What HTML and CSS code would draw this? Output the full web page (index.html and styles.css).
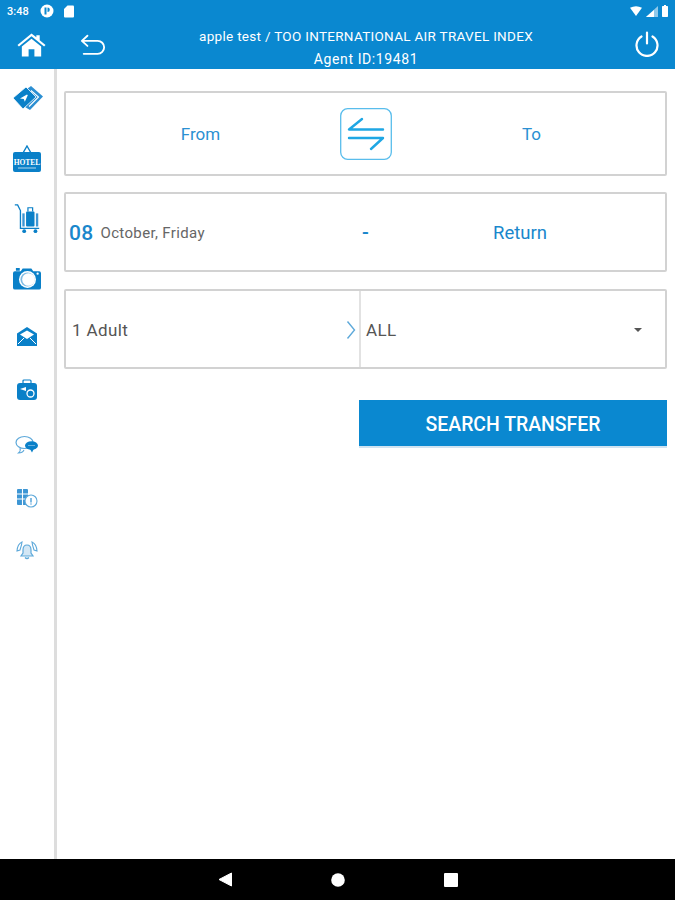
FILE: index.html
```html
<!DOCTYPE html>
<html lang="en">
<head>
<meta charset="utf-8">
<title>Search Transfer</title>
<link rel="stylesheet" href="styles.css">
</head>
<body>
<div class="app">
  <header class="topbar">
    <div class="status">
      <div class="status-left">
        <span class="clock">3:48</span>
        <svg class="st-icon" width="14" height="14" viewBox="0 0 14 14"><circle cx="7" cy="7" r="6.500" fill="#fff"/><path d="M4.500 3.500h2v7h-2zM7.500 3.500a2.300 2.300 0 0 1 0 4.600z" fill="#0a88d0"/></svg>
        <svg class="st-icon" width="10" height="13" viewBox="0 0 10 13"><path d="M3.500 .5H9a1 1 0 0 1 1 1v10a1 1 0 0 1-1 1H1a1 1 0 0 1-1-1V4z" fill="#fff"/></svg>
      </div>
      <div class="status-right">
        <svg width="12" height="10" viewBox="0 0 12 10"><path d="M0 1.800Q6-1.500 12 1.800L6 10z" fill="#fff"/></svg>
        <svg width="12" height="11" viewBox="0 0 12 11"><path d="M12 0v11H0z" fill="#fff" opacity=".55"/><path d="M8 4v7H0z" fill="#fff"/></svg>
        <svg width="6" height="12" viewBox="0 0 6 12"><path d="M2 0h2v1h1.300q.7 0 .7.8v9.400q0 .8-.7.8H.7q-.7 0-.7-.8V1.800q0-.8.7-.8H2z" fill="#fff"/></svg>
      </div>
    </div>
    <div class="toolbar">
      <svg class="home" width="29" height="24" viewBox="0 0 30 24"><path d="M15 0 20 4V1.800h3.500V7L29.500 12 28 13.500 15 3 2 13.500 .5 12z" fill="#fff"/><path d="M15 5.500 25 13.500V24H18V16.500H12V24H5V13.500z" fill="#fff"/></svg>
      <svg class="back" width="26" height="22" viewBox="0 0 28 23"><path d="M8 1.500 2 7l6 5.500M2.500 7H19a6.800 6.800 0 0 1 0 14H4" fill="none" stroke="#fff" stroke-width="2" stroke-linecap="round" stroke-linejoin="round"/></svg>
      <div class="agent">
        <div>apple test / TOO INTERNATIONAL AIR TRAVEL INDEX</div>
        <div class="agent-id">Agent ID:19481</div>
      </div>
      <svg class="power" width="26" height="26" viewBox="0 0 26 26"><path d="M7.500 5.500a10.500 10.500 0 1 0 11 0M13 1.500v11" fill="none" stroke="#fff" stroke-width="2.200" stroke-linecap="round"/></svg>
    </div>
  </header>

  <div class="body">
    <nav class="side">
      <svg width="30" height="24" viewBox="0 0 30 24"><path d="M14 3 18 0l12 10.500L17 24l-5-3z" fill="#2c8fd2"/><path d="M18 4.500 25.500 11 16 20.500" fill="none" stroke="#fff" stroke-width="1.100"/><path d="M0 12 13 1l10 10L10 23z" fill="#0a80c8" stroke="#fff" stroke-width=".8"/><path d="M7 12.500l7-4 .8.8-3 6.500-1-2.800z" fill="#fff"/></svg>
      <svg width="28" height="28" viewBox="0 0 28 28"><path d="M14 1l4 7h-8z" fill="none" stroke="#0a80c8" stroke-width="1.400"/><rect x="0" y="7" width="28" height="20" rx="2" fill="#0a80c8"/><text x="14" y="19.500" class="hotel">HOTEL</text><path d="M5 23h18" stroke="#fff" stroke-width="1" opacity=".7"/></svg>
      <svg width="28" height="30" viewBox="0 0 28 32"><path d="M1 1h3l3 6v19h20" fill="none" stroke="#0a80c8" stroke-width="1.400"/><rect x="9" y="10" width="2.500" height="14" fill="#3d96d4"/><rect x="13" y="8" width="9" height="16" rx="1" fill="#0a80c8"/><path d="M15 8V4h5v4" fill="none" stroke="#0a80c8" stroke-width="1.300"/><rect x="23.500" y="10" width="2.500" height="14" fill="#3d96d4"/><circle cx="11" cy="29" r="2" fill="#0a80c8"/><circle cx="23" cy="29" r="2" fill="#0a80c8"/></svg>
      <svg width="28" height="24" viewBox="0 0 29 24"><path d="M3 .5h4v3H3zM2 4h6l2-3h9l2 3h6q2 0 2 2v15q0 2-2 2H2q-2 0-2-2V6q0-2 2-2z" fill="#0a80c8"/><circle cx="15" cy="12.500" r="8.800" fill="#fff"/><circle cx="15" cy="12.500" r="7.300" fill="#7fbbe3"/><circle cx="16" cy="12.500" r="6.500" fill="#fff"/><circle cx="25.500" cy="6.500" r="1.200" fill="#fff"/></svg>
      <svg width="22" height="19" viewBox="0 0 22 19"><path d="M11 0 21 6.500V19H1V6.500z" fill="#0a80c8"/><path d="M4 7.500 11 3.500 18 7.500 11 12z" fill="#fff"/><path d="M2 17l6-6M20 17l-6-6" stroke="#fff" stroke-width="1"/></svg>
      <svg width="22" height="22" viewBox="0 0 22 22"><path d="M7 4V2q0-1 1-1h6q1 0 1 1v2" fill="none" stroke="#0a80c8" stroke-width="1.200"/><rect x="1" y="4" width="20" height="17" rx="3" fill="#0a80c8"/><path d="M4 10l6-2v4z" fill="#fff"/><circle cx="14.500" cy="14.500" r="3.500" fill="none" stroke="#fff" stroke-width="1.300"/></svg>
      <svg width="24" height="20" viewBox="0 0 24 20"><ellipse cx="9.500" cy="7.500" rx="8.500" ry="6" fill="none" stroke="#5ea9da" stroke-width="1.200"/><path d="M5 13q1 3-1.500 5 4 0 5.500-3" fill="none" stroke="#5ea9da" stroke-width="1.100"/><ellipse cx="16.500" cy="10.500" rx="6.500" ry="4.300" fill="#0a80c8"/><path d="M15 14l2 3.500 2-4z" fill="#0a80c8"/><path d="M13 10.500h7" stroke="#7fbbe3" stroke-width=".8"/></svg>
      <svg width="22" height="20" viewBox="0 0 22 20"><rect x="1" y="1" width="11" height="16" rx="1" fill="#3d96d4"/><path d="M6.500 1v16M1 6h11M1 11h11" stroke="#fff" stroke-width="1.100"/><circle cx="15" cy="13" r="6" fill="#fff" stroke="#5ea9da" stroke-width="1.100"/><path d="M15 10v4.500" stroke="#3d96d4" stroke-width="1.300"/><circle cx="15" cy="16" r=".7" fill="#3d96d4"/></svg>
      <svg width="22" height="19" viewBox="0 0 22 19"><path d="M11 4q4 0 4 5v3l2 3H5l2-3V9q0-5 4-5z" fill="#d3e7f5" stroke="#5ea9da" stroke-width="1.200"/><path d="M9 16.500q2 2 4 0" fill="none" stroke="#5ea9da" stroke-width="1.200"/><path d="M6 1Q1.500 3 1 10l3-1 1.500-5zM16 1q4.500 2 5 9l-3-1-1.500-5z" fill="none" stroke="#5ea9da" stroke-width="1.100"/></svg>
    </nav>

    <main class="content">
      <section class="box route">
        <div class="route-cell from">From</div>
        <div class="swap">
          <svg width="52" height="52" viewBox="0 0 52 52"><rect x=".7" y=".7" width="50.600" height="50.600" rx="7" fill="#fff" stroke="#59bdec" stroke-width="1.300"/><path d="M22 11 9 21.500h34M9 30h34L31 41" fill="none" stroke="#1fa7e4" stroke-width="2.400" stroke-linecap="round" stroke-linejoin="round"/></svg>
        </div>
        <div class="route-cell to">To</div>
      </section>

      <section class="box dates">
        <div class="date"><span class="day">08</span><span class="month">October, Friday</span></div>
        <div class="dash">-</div>
        <div class="return">Return</div>
      </section>

      <section class="box options">
        <div class="pax">
          <span>1 Adult</span>
          <svg width="10" height="20" viewBox="0 0 10 20"><path d="M1.500 1.500 8.500 10l-7 8.500" fill="none" stroke="#5ea9da" stroke-width="1.400"/></svg>
        </div>
        <div class="cls">
          <span>ALL</span>
          <span class="caret"></span>
        </div>
      </section>

      <div class="actions">
        <button class="search" type="button">SEARCH TRANSFER</button>
      </div>
    </main>
  </div>

  <footer class="navbar">
    <svg width="14" height="15" viewBox="0 0 14 15"><path d="M13.500 1v13L1 7.500z" fill="#fff" stroke="#fff" stroke-linejoin="round"/></svg>
    <svg width="14" height="14" viewBox="0 0 14 14"><circle cx="7" cy="7" r="6.800" fill="#fff"/></svg>
    <svg width="14" height="14" viewBox="0 0 14 14"><rect width="14" height="14" rx="1" fill="#fff"/></svg>
  </footer>
</div>
</body>
</html>
```

FILE: styles.css
```css
* { box-sizing: border-box; }
html, body { margin: 0; padding: 0; }
body {
  width: 675px;
  height: 900px;
  overflow: hidden;
  background: #fff;
  font-family: Roboto, "Liberation Sans", sans-serif;
  color: #444;
}
.app { display: flex; flex-direction: column; height: 900px; }

.topbar { height: 69px; background: #0a88d0; color: #fff; flex: none; }
.status {
  height: 22px;
  display: flex;
  justify-content: space-between;
  align-items: center;
  padding: 0 7px;
}
.status-left { display: flex; align-items: center; gap: 10px; }
.status-left .st-icon:first-of-type { margin-left: 1px; }
.status-right { display: flex; align-items: center; gap: 4px; }
.clock { font-size: 11px; font-weight: 500; }

.toolbar { height: 47px; display: flex; align-items: center; }
.home { margin: -2px 0 0 17px; flex: none; }
.back { margin: -2px 0 0 34px; flex: none; }
.agent {
  flex: 1;
  text-align: center;
  font-size: 13.500px;
  letter-spacing: .3px;
  line-height: 23px;
  margin: 5px 0 0 22px;
  white-space: nowrap;
}
.agent-id { font-size: 14px; letter-spacing: .6px; }
.power { margin: -3px 15px 0 30px; flex: none; }

.body { flex: 1; display: flex; min-height: 0; }
.side {
  width: 57px;
  flex: none;
  border-right: 3px solid #ddd;
  display: flex;
  flex-direction: column;
  align-items: center;
  padding: 17px 0 0;
}
.side svg { display: block; }
.side svg:nth-child(1) { margin: 0 0 35px 2px; }
.side svg:nth-child(2) { margin-bottom: 31px; }
.side svg:nth-child(3) { margin-bottom: 33px; }
.side svg:nth-child(4) { margin-bottom: 36px; }
.side svg:nth-child(5) { margin-bottom: 33px; }
.side svg:nth-child(6) { margin-bottom: 34px; }
.side svg:nth-child(7) { margin-bottom: 33px; }
.side svg:nth-child(8) { margin-bottom: 33px; }

.content { flex: 1; padding: 22px 8px 0 7px; min-width: 0; }
.box {
  border: 2px solid #d2d2d2;
  border-radius: 2px;
  background: #fff;
  display: flex;
  align-items: center;
}
.route { height: 85px; margin-bottom: 16px; font-size: 17px; color: #2a90d2; }
.route-cell { text-align: center; }
.from { width: 269px; }
.swap { width: 52px; height: 52px; flex: none; margin-left: 5px; }
.swap svg { display: block; }
.to { flex: 1; padding-left: 6px; }
.dates { height: 80px; margin-bottom: 17px; color: #1a87cc; }
.date { display: flex; align-items: center; gap: 7px; width: 296px; padding: 2px 0 0 3px; }
.day { font-size: 21px; font-weight: 500; letter-spacing: .3px; }
.month { font-size: 15px; letter-spacing: .35px; color: #666; }
.dash { width: 20px; font-size: 20px; font-weight: 500; }
.return { flex: 1; text-align: center; font-size: 18.500px; padding: 2px 31px 0 0; margin-left: 24px; }
.options { height: 80px; align-items: stretch; font-size: 17px; letter-spacing: .4px; color: #555; }
.pax {
  width: 295px;
  flex: none;
  display: flex;
  align-items: center;
  justify-content: space-between;
  padding: 1px 3px 0 6px;
  border-right: 2px solid #e2e2e2;
}
.cls {
  flex: 1;
  display: flex;
  align-items: center;
  justify-content: space-between;
  padding: 1px 23px 0 5px;
}
.caret {
  width: 0; height: 0;
  border-left: 4px solid transparent;
  border-right: 4px solid transparent;
  border-top: 4px solid #555;
}
.actions { display: flex; justify-content: flex-end; margin-top: 31px; }
.search {
  width: 308px;
  height: 48px;
  border: 0;
  border-bottom: 2px solid #cfe3f1;
  padding-top: 4px;
  background: #0a88d0;
  color: #fff;
  font-family: inherit;
  font-size: 19.400px;
  font-weight: 500;
}

.navbar {
  height: 41px;
  flex: none;
  background: #000;
  display: flex;
  align-items: center;
  padding-left: 218px;
  gap: 99px;
}
.hotel { font: 700 7.500px "Liberation Serif", serif; fill: #fff; text-anchor: middle; }
```
